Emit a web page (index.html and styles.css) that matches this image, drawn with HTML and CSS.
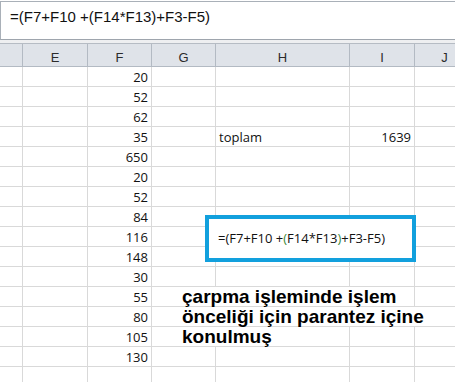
FILE: index.html
```html
<!DOCTYPE html>
<html lang="en">
<head>
  <meta charset="UTF-8" />
  <title>Formül</title>
  <link rel="stylesheet" href="styles.css">
</head>
<body>
  <div class="sheet">
    <!-- formula bar -->
    <div class="formula-bar">=(F7+F10 +(F14*F13)+F3-F5)</div>
    <div class="bar-gap"></div>

    <div class="grid">
      <div class="head"></div>
      <div class="head">E</div>
      <div class="head">F</div>
      <div class="head">G</div>
      <div class="head">H</div>
      <div class="head">I</div>
      <div class="head">J</div>

      <div class="cell"></div><div class="cell"></div><div class="cell num">20</div><div class="cell"></div><div class="cell"></div><div class="cell"></div><div class="cell"></div>
      <div class="cell"></div><div class="cell"></div><div class="cell num">52</div><div class="cell"></div><div class="cell"></div><div class="cell"></div><div class="cell"></div>
      <div class="cell"></div><div class="cell"></div><div class="cell num">62</div><div class="cell"></div><div class="cell"></div><div class="cell"></div><div class="cell"></div>
      <div class="cell"></div><div class="cell"></div><div class="cell num">35</div><div class="cell"></div><div class="cell">toplam</div><div class="cell num">1639</div><div class="cell"></div>
      <div class="cell"></div><div class="cell"></div><div class="cell num">650</div><div class="cell"></div><div class="cell"></div><div class="cell"></div><div class="cell"></div>
      <div class="cell"></div><div class="cell"></div><div class="cell num">20</div><div class="cell"></div><div class="cell"></div><div class="cell"></div><div class="cell"></div>
      <div class="cell"></div><div class="cell"></div><div class="cell num">52</div><div class="cell"></div><div class="cell"></div><div class="cell"></div><div class="cell"></div>
      <div class="cell"></div><div class="cell"></div><div class="cell num">84</div><div class="cell"></div><div class="cell"></div><div class="cell"></div><div class="cell"></div>
      <div class="cell"></div><div class="cell"></div><div class="cell num">116</div><div class="cell"></div><div class="cell"></div><div class="cell"></div><div class="cell"></div>
      <div class="cell"></div><div class="cell"></div><div class="cell num">148</div><div class="cell"></div><div class="cell"></div><div class="cell"></div><div class="cell"></div>
      <div class="cell"></div><div class="cell"></div><div class="cell num">30</div><div class="cell"></div><div class="cell"></div><div class="cell"></div><div class="cell"></div>
      <div class="cell"></div><div class="cell"></div><div class="cell num">55</div><div class="cell"><span class="note">çarpma işleminde işlem</span></div><div class="cell"></div><div class="cell"></div><div class="cell"></div>
      <div class="cell"></div><div class="cell"></div><div class="cell num">80</div><div class="cell"><span class="note">önceliği için parantez içine</span></div><div class="cell"></div><div class="cell"></div><div class="cell"></div>
      <div class="cell"></div><div class="cell"></div><div class="cell num">105</div><div class="cell"><span class="note">konulmuş</span></div><div class="cell"></div><div class="cell"></div><div class="cell"></div>
      <div class="cell"></div><div class="cell"></div><div class="cell num">130</div><div class="cell"></div><div class="cell"></div><div class="cell"></div><div class="cell"></div>
      <div class="cell"></div><div class="cell"></div><div class="cell"></div><div class="cell"></div><div class="cell"></div><div class="cell"></div><div class="cell"></div>
    </div>

    <!-- highlighted formula -->
    <div class="callout">=(F7+F10 +<span class="paren">(</span>F14*F13<span class="paren">)</span>+F3-F5)</div>
  </div>
</body>
</html>
```

FILE: styles.css
```css
body {
  margin: 0;
  font-family: "Open Sans", "Liberation Sans", sans-serif;
  background: #ffffff;
}

.sheet {
  position: relative;
  width: 455px;
  height: 382px;
  overflow: hidden;
  padding-top: 1px;
  box-sizing: border-box;
}

.formula-bar {
  height: 39px;
  box-sizing: border-box;
  border-top: 1px solid #a9b0b8;
  border-left: 1px solid #a9b0b8;
  border-bottom: 1px solid #9ea5ad;
  padding: 6px 0 0 9px;
  font-family: "Liberation Sans", Arial, sans-serif;
  font-size: 15px;
  color: #111;
}

.bar-gap {
  height: 3px;
  background: #eeeff1;
  border-bottom: 1px solid #b6bcc4;
}

.grid {
  display: grid;
  grid-template-columns: 23px 65px 64px 64px 134px 65px 60px;
  grid-template-rows: 23px;
  grid-auto-rows: 20px;
}

.grid .head {
  background: #dfe3e9;
  border-right: 1px solid #b3bac3;
  border-bottom: 1px solid #b3bac3;
  box-sizing: border-box;
  text-align: center;
  font-family: "Liberation Sans", Arial, sans-serif;
  font-size: 13px;
  padding-top: 6px;
  line-height: 15px;
  color: #2b2b2b;
}

.cell {
  border-right: 1px solid #d9d9d9;
  border-bottom: 1px solid #d9d9d9;
  box-sizing: border-box;
  font-size: 13px;
  line-height: 19px;
  padding: 1px 3px 0;
  color: #111;
  white-space: nowrap;
}

.cell.num {
  text-align: right;
}

.note {
  position: relative;
  z-index: 1;
  display: inline-block;
  background: #ffffff;
  margin: -1px 0 0 27px;
  padding-right: 2px;
  font-family: "Liberation Sans", Arial, sans-serif;
  font-weight: bold;
  font-size: 19px;
  line-height: 19px;
  vertical-align: top;
  color: #000;
}

.callout {
  position: absolute;
  left: 205px;
  top: 215px;
  width: 211px;
  height: 47px;
  box-sizing: border-box;
  border: 4px solid #12a0dd;
  background: #ffffff;
  padding: 9px 0 0 9px;
  font-size: 13px;
  line-height: 20px;
  color: #111;
  white-space: nowrap;
}

.paren {
  color: #3c8a3c;
}
```
